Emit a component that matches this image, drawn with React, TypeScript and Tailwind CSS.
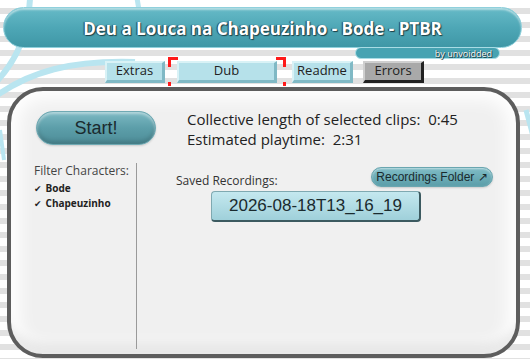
import React from "react";

const tabBase =
  "h-[22px] flex items-center justify-center text-[13px] text-[#222] border-t-2 border-l-2 border-r-[3px] border-b-[3px]";

function Tab({ label, width }: { label: string; width: string }) {
  return (
    <div className={`${tabBase} ${width} bg-[#b6e1ea] border-t-[#d9f2f6] border-l-[#d9f2f6] border-r-[#80b9c5] border-b-[#80b9c5]`}>
      {label}
    </div>
  );
}

export default function App() {
  return (
    <div
      className="relative w-[530px] h-[359px] overflow-hidden bg-[repeating-linear-gradient(180deg,#ffffff_0px,#ffffff_8px,#e1e1e1_8px,#e1e1e1_14px)]"
      style={{ fontFamily: '"Open Sans", "DejaVu Sans", sans-serif' }}
    >
      {/* background swooshes */}
      <svg className="absolute inset-0" width="530" height="359" viewBox="0 0 530 359" fill="none">
        <path d="M30 -2 C29 25 22 55 -4 82" stroke="#b9e5f0" strokeWidth="6" />
        <path d="M-4 96 C30 72 70 60 135 62" stroke="#b9e5f0" strokeWidth="6" />
        <path d="M137 -2 L139 10" stroke="#b9e5f0" strokeWidth="5" />
        <path d="M526 110 L534 140" stroke="#b9e5f0" strokeWidth="5" />
        <path d="M0 130 L4 160" stroke="#b9e5f0" strokeWidth="4" />
      </svg>

      <div className="relative flex flex-col">
        {/* title */}
        <div className="mx-[3px] mt-[7px] w-[519px] h-[41px] rounded-full bg-gradient-to-b from-[#66bac7] via-[#4ea7b6] to-[#3f97a6] border border-[#8fd0dc] shadow-[inset_0_2px_2px_rgba(255,255,255,0.5)] flex items-center justify-center pt-[2px]">
          <span className="text-white font-bold text-[17px] [text-shadow:1px_1px_1px_#1d3f45,-1px_0_1px_#1d3f45]">
            Deu a Louca na Chapeuzinho - Bode - PTBR
          </span>
        </div>
        <div className="ml-[355px] w-[145px] h-[12px] -mt-[1px] rounded-full bg-[#47a3b2] border border-[#a9dce5] flex items-center justify-end pr-[7px]">
          <span className="text-white text-[9px] leading-none [text-shadow:0_0_1px_#1d3f45,1px_1px_0_#1d3f45]">by unvoidded</span>
        </div>

        {/* tabs */}
        <div className="flex items-center h-[29px] -mt-[2px] pl-[105px]">
          <Tab label="Extras" width="w-[60px]" />
          <div className="relative ml-[3px] px-[9px] h-[29px] flex items-center">
            <span className="absolute left-0 top-0 w-[10px] h-[10px] border-t-[3px] border-l-[3px] border-[#ff1a1a]" />
            <span className="absolute right-0 top-0 w-[10px] h-[10px] border-t-[3px] border-r-[3px] border-[#ff1a1a]" />
            <span className="absolute left-0 bottom-0 w-[3px] h-[4px] bg-[#ff1a1a]" />
            <span className="absolute right-0 bottom-0 w-[3px] h-[4px] bg-[#ff1a1a]" />
            <Tab label="Dub" width="w-[100px]" />
          </div>
          <div className="ml-[6px]">
            <Tab label="Readme" width="w-[61px]" />
          </div>
          <div className="ml-[10px] h-[22px] w-[61px] flex items-center justify-center text-[13px] text-[#222] bg-[#a9a9a9] border-t-2 border-l-2 border-t-[#cfcfcf] border-l-[#cfcfcf] border-r-[3px] border-b-[3px] border-r-[#222] border-b-[#222]">
            Errors
          </div>
        </div>

        {/* main panel */}
        <div className="ml-[7px] mt-[1px] w-[513px] h-[271px] rounded-[36px] border-4 border-[#5d5d5d] bg-[#f0f0f0] shadow-[inset_0_-16px_10px_-6px_rgba(0,0,0,0.08),inset_0_0_18px_8px_#ffffff] flex flex-col">
          <div className="flex items-start pt-[20px] pl-[25px]">
            <button
              className="w-[120px] h-[34px] rounded-full bg-gradient-to-b from-[#7cb9c3] via-[#5c9ea9] to-[#4d8d98] border border-[#6fa9b3] shadow-[inset_0_2px_3px_rgba(255,255,255,0.45),inset_0_-3px_4px_rgba(0,0,0,0.15),0_1px_2px_rgba(0,0,0,0.15)] text-[#1a2a2e] text-[18px]"
              style={{ fontFamily: '"Liberation Sans", sans-serif' }}
            >
              Start!
            </button>
            <div className="ml-[31px] -mt-[2px] text-[15px] leading-[20px] text-[#222]">
              <div>Collective length of selected clips:&nbsp; 0:45</div>
              <div>Estimated playtime:&nbsp; 2:31</div>
            </div>
          </div>

          <div className="flex mt-[14px] h-[186px]">
            <div className="w-[126px] border-r border-[#9a9a9a] pl-[23px] pt-[1px]">
              <div className="text-[12px] text-[#444] leading-[14px]">Filter Characters:</div>
              <div className="mt-[3px] text-[10px] font-bold text-[#222] leading-[15px]">
                <div className="flex items-center gap-[4px]"><span className="text-[9px]">✔</span>Bode</div>
                <div className="flex items-center gap-[4px]"><span className="text-[9px]">✔</span>Chapeuzinho</div>
              </div>
            </div>
            <div className="flex-1 pl-[39px] pr-[23px] pt-[4px]">
              <div className="flex items-end justify-between">
                <span className="text-[12px] text-[#333] leading-[14px] mb-[-1px]">Saved Recordings:</span>
                <div
                  className="w-[122px] h-[20px] rounded-full bg-gradient-to-b from-[#7fbcc6] to-[#5b9ea9] border border-[#6aa6b0] shadow-[inset_0_1px_2px_rgba(255,255,255,0.5),0_1px_2px_rgba(0,0,0,0.15)] flex items-center justify-center text-[12px] text-[#1a2a2e]"
                  style={{ fontFamily: '"Liberation Sans", sans-serif' }}
                >
                  Recordings Folder ↗
                </div>
              </div>
              <div
                className="ml-[35px] mt-[4px] w-[210px] h-[31px] rounded-[4px] bg-gradient-to-b from-[#c4e8ef] to-[#9fd0da] border border-[#7fa9b1] border-b-2 border-r-2 border-b-[#3c5a60] border-r-[#3c5a60] flex items-center justify-center text-[17px] text-[#1a2a2e]"
                style={{ fontFamily: '"Liberation Sans", sans-serif' }}
              >
                2026-08-18T13_16_19
              </div>
            </div>
          </div>
        </div>
      </div>
    </div>
  );
}
